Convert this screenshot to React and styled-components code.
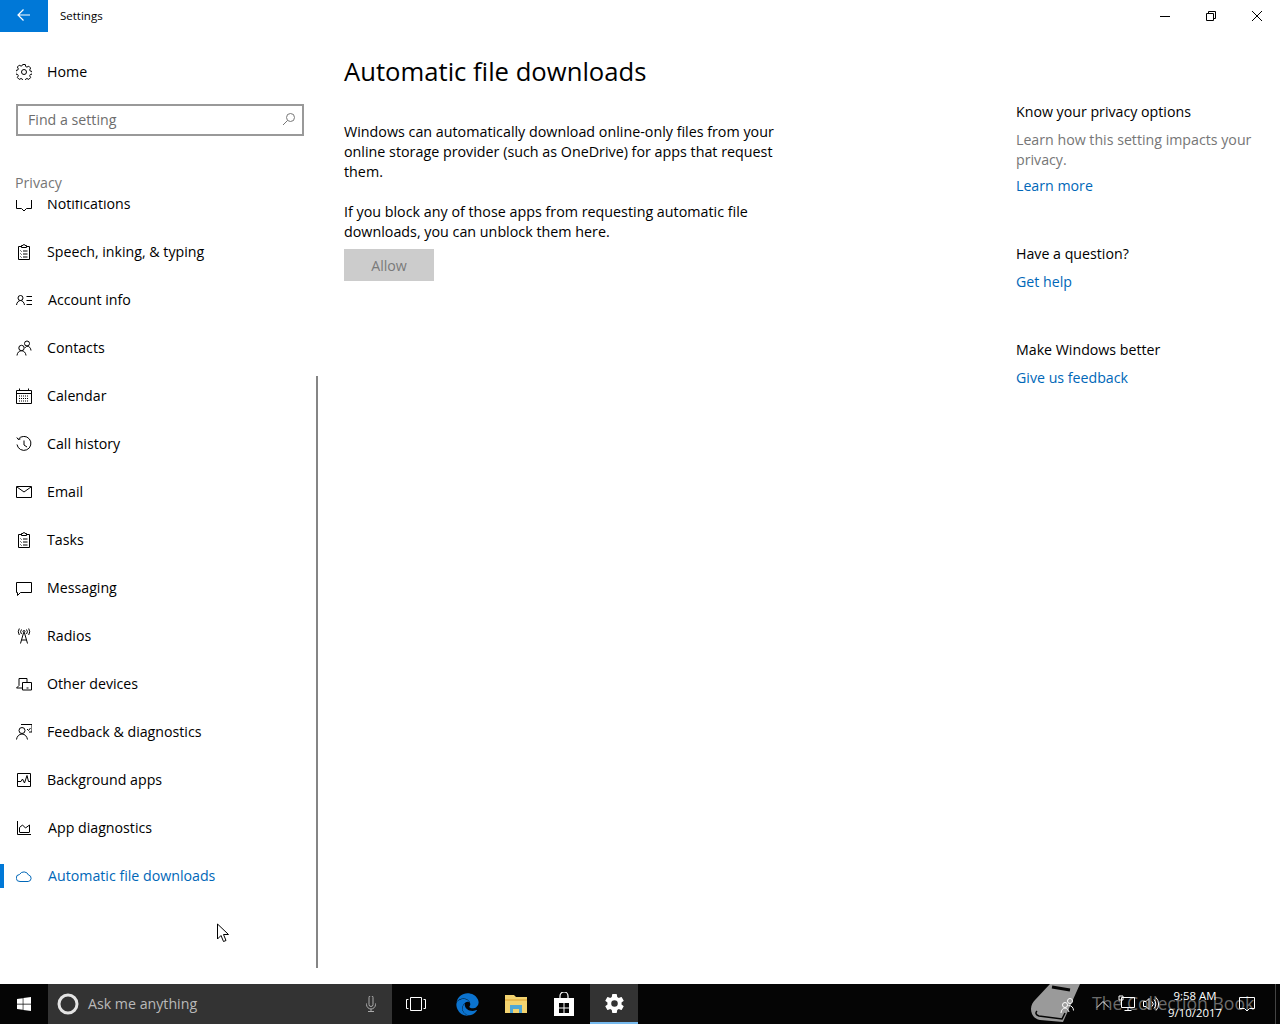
import React from 'react';
import styled, { createGlobalStyle } from 'styled-components';
import { FaEdge, FaWindows } from 'react-icons/fa';
import { IoSettingsSharp } from 'react-icons/io5';

const GlobalStyle = createGlobalStyle`
  html, body { margin: 0; padding: 0; background: #fff; }
  body { font-family: "Open Sans", "Noto Sans", "Liberation Sans", sans-serif; color: #000; }
  * { box-sizing: border-box; }
`;

const Screen = styled.div`
  position: relative;
  width: 1280px;
  height: 1024px;
  overflow: hidden;
  display: flex;
  flex-direction: column;
`;
const TitleBar = styled.div`
  height: 32px;
  display: flex;
  align-items: center;
  flex: none;
`;
const BackButton = styled.div`
  width: 48px;
  height: 32px;
  background: #0078d7;
  color: #fff;
  display: flex;
  align-items: center;
  justify-content: center;
  padding-bottom: 2px;
`;
const AppTitle = styled.div`
  font-size: 11.5px;
  margin-left: 12px;
  padding-bottom: 2px;
  flex: 1;
`;
const WinButton = styled.div`
  width: 46px;
  height: 32px;
  display: flex;
  align-items: center;
  justify-content: center;
`;
const Body = styled.div`
  flex: 1;
  display: flex;
  min-height: 0;
`;
const Sidebar = styled.div`
  position: relative;
  width: 320px;
  flex: none;
  padding-top: 16px;
  display: flex;
  flex-direction: column;
`;
const HomeRow = styled.div`
  height: 48px;
  padding-left: 16px;
  display: flex;
  align-items: center;
  gap: 15px;
  font-size: 14.2px;
`;
const RowLabel = styled.span`
  margin-top: -2px;
`;
const SearchBox = styled.div`
  margin: 8px 0 0 16px;
  width: 288px;
  height: 32px;
  border: 2px solid #999;
  padding: 0 6px 2px 10px;
  display: flex;
  align-items: center;
  justify-content: space-between;
  font-size: 14.2px;
  color: #6d6d6d;
`;
const SectionLabel = styled.div`
  margin: 37px 0 0 15px;
  height: 20px;
  line-height: 20px;
  font-size: 14.2px;
  color: #767676;
  position: relative;
  z-index: 1;
`;
const NavClip = styled.div`
  margin-top: 7px;
  flex: 1;
  overflow: hidden;
`;
const NavScroll = styled.div`
  margin-top: -20px;
`;
const NavItem = styled.div`
  position: relative;
  height: 48px;
  padding-left: 16px;
  display: flex;
  align-items: center;
  gap: ${(p) => (p.$wide ? 16 : 15)}px;
  font-size: 14.2px;
  color: ${(p) => (p.$active ? '#0067b8' : '#000')};
  &::before {
    content: '';
    display: ${(p) => (p.$active ? 'block' : 'none')};
    position: absolute;
    left: 0;
    top: 12px;
    width: 4px;
    height: 24px;
    background: #0078d7;
  }
`;
const ScrollThumb = styled.div`
  position: absolute;
  left: 316px;
  top: 344px;
  width: 2px;
  height: 592px;
  background: #858585;
`;
const Main = styled.div`
  flex: 1;
  display: flex;
  justify-content: space-between;
  padding: 0 14px 0 24px;
`;
const Content = styled.div`
  width: 450px;
  padding-top: 20px;
`;
const Heading = styled.h1`
  margin: 0 0 30px;
  height: 40px;
  line-height: 40px;
  font-size: 25.65px;
  font-weight: 400;
`;
const Para = styled.p`
  margin: 0 0 20px;
  font-size: 14.3px;
  line-height: 20px;
  &:last-of-type { margin-bottom: 7px; }
`;
const AllowButton = styled.div`
  width: 90px;
  height: 32px;
  background: #ccc;
  color: #7a7a7a;
  font-size: 14.2px;
  display: flex;
  align-items: center;
  justify-content: center;
`;
const Aside = styled.div`
  width: 250px;
  padding-top: 70px;
  display: flex;
  flex-direction: column;
  gap: 48px;
`;
const AsideBlock = styled.div`
  display: flex;
  flex-direction: column;
  gap: 8px;
  font-size: 14.2px;
  line-height: 20px;
`;
const AsideText = styled.div`
  color: #767676;
  margin-bottom: -2px;
`;
const AsideLink = styled.div`
  color: #0067b8;
`;
const Taskbar = styled.div`
  height: 40px;
  flex: none;
  background: #050505;
  display: flex;
  align-items: stretch;
  color: #fff;
`;
const TaskSlot = styled.div`
  width: ${(p) => p.$w || 48}px;
  flex: none;
  display: flex;
  align-items: center;
  justify-content: center;
  background: ${(p) => (p.$active ? '#333' : 'transparent')};
  border-bottom: ${(p) => (p.$active ? '2px solid #76b9ed' : 'none')};
`;
const SearchBar = styled.div`
  width: 344px;
  flex: none;
  background: #333;
  display: flex;
  align-items: center;
  padding: 0 13px 0 9px;
`;
const AskText = styled.div`
  flex: 1;
  margin: -2px 0 0 9px;
  font-size: 14.2px;
  color: #b9b9b9;
`;
const Tray = styled.div`
  margin-left: auto;
  display: flex;
  align-items: center;
  position: relative;
  z-index: 1;
`;
const Clock = styled.div`
  width: 64px;
  text-align: center;
  font-size: 11.4px;
  line-height: 17px;
  margin-top: -1px;
`;
const TraySlot = styled.div`
  width: ${(p) => p.$w}px;
  display: flex;
  align-items: center;
  justify-content: center;
`;
const DesktopEdge = styled.div`
  width: 1px;
  height: 40px;
  margin: 0 4px 0 8px;
  background: #444;
`;
const Watermark = styled.div`
  position: absolute;
  left: 1030px;
  top: 982px;
  height: 42px;
  display: flex;
  align-items: center;
  gap: 11px;
  color: #6b6b6b;
  font-size: 17.6px;
  white-space: nowrap;
`;
const Cursor = styled.svg`
  position: absolute;
  left: 216px;
  top: 923px;
`;

const Ico = ({ children, size = 16, view = 16, color = 'currentColor', sw = 1 }) => (
  <svg
    width={size}
    height={size}
    viewBox={`0 0 ${view} ${view}`}
    fill="none"
    stroke={color}
    strokeWidth={sw}
    style={{ flex: 'none', display: 'block' }}
  >
    {children}
  </svg>
);

const Clipboard = () => (
  <Ico>
    <path d="M5 2.5H2.500v13h11v-13H11M5.500 3.500V1.500h1.500a1 1 0 0 1 2 0h1.500v2z" />
    <path d="M4.500 6.500l1 1M4.500 9.500l1 1M4.500 12.500l1 1M7 7h4.500M7 10h4.500M7 13h4.500" />
  </Ico>
);

const icons = {
  bell: (
    <Ico>
      <path d="M.5 2v10.500h5l2.500 2.500 2.500-2.500h5V2" />
    </Ico>
  ),
  clipboard: <Clipboard />,
  account: (
    <Ico>
      <circle cx="4.500" cy="6" r="2.500" />
      <path d="M.5 13c.3-2.500 2-4.500 4-4.500s3.700 2 4 4.500M10.500 4.500H16M10.500 8.500H16M10.500 12.500H16" />
    </Ico>
  ),
  contacts: (
    <Ico>
      <circle cx="5.500" cy="8" r="2.700" />
      <circle cx="11" cy="3.500" r="2.500" />
      <path d="M1 15.500c.2-2.800 2.200-4.800 4.500-4.800s4.300 2 4.500 4.800M9 8c1-1.300 1.200-1.800 2-1.800 2.300 0 3.800 1.800 4 4.300" />
    </Ico>
  ),
  calendar: (
    <Ico>
      <path d="M.5 2.500h15v13H.5zM.5 5.500h15M3.500 .5v2M12.500 .5v2" />
      <path d="M3 8h10M3 10.500h10M3 13h10" strokeDasharray="1 1" />
    </Ico>
  ),
  history: (
    <Ico>
      <path d="M2.300 3.200A7 7 0 1 1 1 8.500M.8 1.500l1.500 2 2.200-.6M8 4.500V9l3 2" />
    </Ico>
  ),
  email: (
    <Ico>
      <path d="M.5 2.500h15v11H.5zM1 3l7 5 7-5" />
    </Ico>
  ),
  message: (
    <Ico>
      <path d="M.5 2.500h15v10H4.500l-3 3v-3h-1z" />
    </Ico>
  ),
  radios: (
    <Ico>
      <circle cx="8" cy="3.500" r="1" />
      <path d="M4.500 15.500L7.500 5h1l3 10.500M5.500 12h5M5.500 1.500a3.500 3.500 0 0 0 0 4.500M10.500 1.500a3.500 3.500 0 0 1 0 4.500M3.300 .5a6 6 0 0 0 0 6.500M12.700 .5a6 6 0 0 1 0 6.500" />
    </Ico>
  ),
  devices: (
    <Ico>
      <path d="M3 9.500V2.500h8V6M.5 12H6M3 9.500L.5 12M6.500 6.500h9v7.500h-9zM10.500 12h2" />
    </Ico>
  ),
  feedback: (
    <Ico>
      <circle cx="6" cy="6.500" r="3" />
      <path d="M.5 15.500c.3-3 2.600-5.500 5.500-5.500s5 2.500 5.500 5.500M5 .5h11V8h-3" />
      <path d="M11 5l1.500 1.500 2-2.500" />
    </Ico>
  ),
  background: (
    <Ico>
      <path d="M1.500 1.500h13v13h-13z" />
      <path d="M1.500 9.500H5l1.500-2.500 2 4 2.500-7.500 1.500 6h2" />
    </Ico>
  ),
  diagnostics: (
    <Ico>
      <path d="M1.500 1v13.500H15M3.500 12.500h10M3.500 12V7.500l3-2.500 3 3 4-3v7" />
    </Ico>
  ),
  cloud: (
    <Ico color="#0067b8">
      <path d="M4 13.500a3.500 3.500 0 0 1-.5-7A5 5 0 0 1 12.500 7a3.300 3.300 0 0 1-.3 6.500z" />
    </Ico>
  ),
};

const navItems = [
  { icon: 'bell', label: 'Notifications' },
  { icon: 'clipboard', label: 'Speech, inking, & typing' },
  { icon: 'account', label: 'Account info', wide: true },
  { icon: 'contacts', label: 'Contacts' },
  { icon: 'calendar', label: 'Calendar' },
  { icon: 'history', label: 'Call history' },
  { icon: 'email', label: 'Email' },
  { icon: 'clipboard', label: 'Tasks' },
  { icon: 'message', label: 'Messaging' },
  { icon: 'radios', label: 'Radios' },
  { icon: 'devices', label: 'Other devices' },
  { icon: 'feedback', label: 'Feedback & diagnostics' },
  { icon: 'background', label: 'Background apps' },
  { icon: 'diagnostics', label: 'App diagnostics', wide: true },
  { icon: 'cloud', label: 'Automatic file downloads', wide: true, active: true },
];

const GearOutline = () => (
  <Ico>
    <circle cx="8" cy="8" r="2.500" />
    <path d="M6.700.5h2.600l.4 2 1.200.6 1.900-.9 1.800 1.800-.9 1.900.6 1.200 2 .4v2.600l-2 .4-.6 1.200.9 1.900-1.800 1.800-1.900-.9-1.200.6-.4 2H6.700l-.4-2-1.200-.6-1.900.9-1.800-1.800.9-1.900-.6-1.200-2-.4V6.500l2-.4.6-1.200-.9-1.900 1.800-1.800 1.900.9 1.200-.6z" />
  </Ico>
);

const App = () => (
  <Screen>
    <GlobalStyle />
    <TitleBar>
      <BackButton>
        <Ico size={14} view={14} sw={1.2}>
          <path d="M13 7H1.500M6.500 1.500L1 7l5.500 5.500" />
        </Ico>
      </BackButton>
      <AppTitle>Settings</AppTitle>
      <WinButton>
        <Ico size={12} view={12}>
          <path d="M1 6.500h10" />
        </Ico>
      </WinButton>
      <WinButton>
        <Ico size={12} view={12}>
          <path d="M1.500 3.500h7v7h-7zM3.500 3.500v-2h7v7h-2" />
        </Ico>
      </WinButton>
      <WinButton>
        <Ico size={12} view={12}>
          <path d="M1 1l10 10M11 1L1 11" />
        </Ico>
      </WinButton>
    </TitleBar>
    <Body>
      <Sidebar>
        <HomeRow>
          <GearOutline />
          <RowLabel>Home</RowLabel>
        </HomeRow>
        <SearchBox>
          Find a setting
          <Ico size={14} view={14} color="#777">
            <circle cx="8.500" cy="5.500" r="4" />
            <path d="M5.500 8.500L1 13" />
          </Ico>
        </SearchBox>
        <SectionLabel>Privacy</SectionLabel>
        <NavClip>
          <NavScroll>
            {navItems.map(({ icon, label, wide, active }) => (
              <NavItem key={label} $wide={wide} $active={active}>
                {icons[icon]}
                <RowLabel>{label}</RowLabel>
              </NavItem>
            ))}
          </NavScroll>
        </NavClip>
        <ScrollThumb />
      </Sidebar>
      <Main>
        <Content>
          <Heading>Automatic file downloads</Heading>
          <Para>
            Windows can automatically download online-only files from your online storage provider (such as OneDrive) for apps that request them.
          </Para>
          <Para>
            If you block any of those apps from requesting automatic file downloads, you can unblock them here.
          </Para>
          <AllowButton>Allow</AllowButton>
        </Content>
        <Aside>
          <AsideBlock>
            <div>Know your privacy options</div>
            <AsideText>Learn how this setting impacts your privacy.</AsideText>
            <AsideLink>Learn more</AsideLink>
          </AsideBlock>
          <AsideBlock>
            <div>Have a question?</div>
            <AsideLink>Get help</AsideLink>
          </AsideBlock>
          <AsideBlock>
            <div>Make Windows better</div>
            <AsideLink>Give us feedback</AsideLink>
          </AsideBlock>
        </Aside>
      </Main>
    </Body>
    <Taskbar>
      <TaskSlot>
        <FaWindows size={16} />
      </TaskSlot>
      <SearchBar>
        <svg width="22" height="22" viewBox="0 0 22 22" fill="none" stroke="#e4e4e4" strokeWidth="3">
          <circle cx="11" cy="11" r="9" />
        </svg>
        <AskText>Ask me anything</AskText>
        <Ico size={16} view={16} color="#aaa">
          <path d="M6 1.500a2 2 0 0 1 4 0v7a2 2 0 0 1-4 0zM3.500 7.500v1a4.500 4.500 0 0 0 9 0v-1M8 13v2.500M5 15.500h6" />
        </Ico>
      </SearchBar>
      <TaskSlot>
        <Ico size={22} view={22} color="#fff">
          <path d="M5.500 4.500h11v13h-11zM3.500 6.500h-2v9h2M18.500 6.500h2v9h-2" />
        </Ico>
      </TaskSlot>
      <TaskSlot $w={54}>
        <FaEdge size={23} color="#0b73cf" />
      </TaskSlot>
      <TaskSlot $w={44}>
        <svg width="22" height="20" viewBox="0 0 22 20">
          <path d="M0 1h9l2 2h11v16H0z" fill="#f3d36f" />
          <path d="M0 5h22v2H0z" fill="#e8b94e" />
          <path d="M5 19v-8h12v8h-3v-4H8v4z" fill="#4fa8d8" />
        </svg>
      </TaskSlot>
      <TaskSlot $w={52}>
        <svg width="22" height="24" viewBox="0 0 22 24">
          <path d="M7 7V4a4 4 0 0 1 8 0v3" fill="none" stroke="#fff" strokeWidth="1.200" />
          <path d="M1 6h20v18H1z" fill="#fff" />
          <path d="M6 11h4.500v4.500H6zM11.500 11H16v4.500h-4.500zM6 16.500h4.500V21H6zM11.500 16.500H16V21h-4.500z" fill="#050505" />
        </svg>
      </TaskSlot>
      <TaskSlot $active>
        <IoSettingsSharp size={21} />
      </TaskSlot>
      <Tray>
        <TraySlot $w={24}>
          <Ico size={16} view={16} color="#fff">
            <path d="M2 11.500L8 5.500l6 6" />
          </Ico>
        </TraySlot>
        <TraySlot $w={24}>
          <Ico size={18} view={18} color="#fff">
            <path d="M3.500 2.500h13v10h-13zM10 12.500v3M6.500 15.500h7M1 1h4v4H1z" />
          </Ico>
        </TraySlot>
        <TraySlot $w={24}>
          <Ico size={18} view={18} color="#fff">
            <path d="M1.500 6.500h2.500l3-3v11l-3-3H1.500zM10 6.500a3.500 3.500 0 0 1 0 5M12 4.500a6.500 6.500 0 0 1 0 9M14 2.500a9.500 9.500 0 0 1 0 13" />
          </Ico>
        </TraySlot>
        <Clock>
          <div>9:58 AM</div>
          <div>9/10/2017</div>
        </Clock>
        <TraySlot $w={40}>
          <Ico size={18} view={18} color="#fff">
            <path d="M1.500 2.500h15v11h-5L9 16l-2.500-2.500h-5z" />
          </Ico>
        </TraySlot>
        <DesktopEdge />
      </Tray>
    </Taskbar>
    <Watermark>
      <svg width="51" height="42" viewBox="0 0 51 42">
        <path d="M1 27c0-4 2-7 4-9L20 2h30L33 40 10 38c-6-1-9-6-9-11z" fill="#9a9a9a" />
        <path d="M22 5l18 3" stroke="#050505" strokeWidth="3" fill="none" />
        <path d="M7 29c-2 2-1 4 2 5l23 3 3-6" stroke="#050505" strokeWidth="1.500" fill="none" />
        <g fill="none" stroke="#fff" strokeWidth="1">
          <circle cx="35" cy="23" r="2.500" />
          <circle cx="40" cy="19" r="2.500" />
          <path d="M31 31c.3-3 2-5 4-5s3.500 2 4 4M38.500 23.500c3 0 5 2 5 5" />
        </g>
      </svg>
      The Collection Book
    </Watermark>
    <Cursor width="14" height="20" viewBox="0 0 14 20">
      <path d="M1.500 1v15l3.500-3.500 2.500 6 2.500-1-2.500-6h5z" fill="#fff" stroke="#000" strokeWidth="1" />
    </Cursor>
  </Screen>
);

export default App;
